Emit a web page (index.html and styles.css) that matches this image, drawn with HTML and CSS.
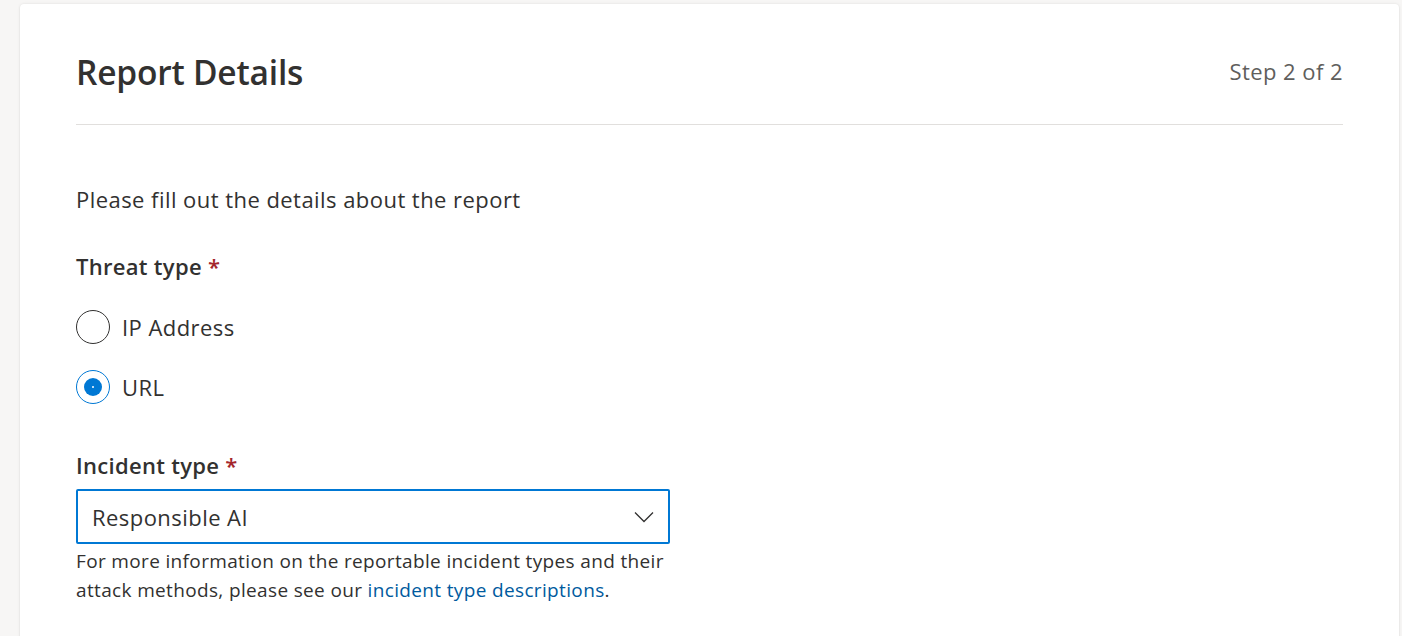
FILE: index.html
```html
<!DOCTYPE html>
<html lang="en">
<head>
<meta charset="utf-8">
<title>Report Details</title>
<link rel="stylesheet" href="styles.css">
</head>
<body>
<main class="card">
  <header class="card-header">
    <h1 class="title">Report Details</h1>
    <span class="step">Step 2 of 2</span>
  </header>
  <p class="intro">Please fill out the details about the report</p>

  <fieldset class="group">
    <legend class="label">Threat type <span class="req">*</span></legend>
    <label class="radio">
      <span class="radio-circle"></span>
      <span class="radio-text">IP Address</span>
    </label>
    <label class="radio">
      <span class="radio-circle checked"><span class="radio-dot"></span></span>
      <span class="radio-text">URL</span>
    </label>
  </fieldset>

  <div class="field">
    <div class="label">Incident type <span class="req">*</span></div>
    <div class="select">
      <span class="select-value">Responsible AI</span>
      <svg class="chevron" width="20" height="12" viewBox="0 0 20 12"><path d="M1 1.5 L10 10.5 L19 1.5" fill="none" stroke="#323130" stroke-width="1.3"/></svg>
    </div>
    <p class="help">For more information on the reportable incident types and their attack methods, please see our <a href="#" class="link">incident type descriptions</a>.</p>
  </div>
</main>
</body>
</html>
```
FILE: styles.css
```css
html, body {
  margin: 0;
  padding: 0;
  background: #f7f6f5;
  height: 100%;
  overflow: hidden;
}
body {
  font-family: "Open Sans", "Noto Sans", sans-serif;
  color: #323130;
  padding: 4px 3px 0 20px;
  box-sizing: border-box;
}
.card {
  background: #ffffff;
  border-radius: 4px;
  box-shadow: 0 0 3px rgba(0,0,0,0.10), 0 1px 2px rgba(0,0,0,0.06);
  padding: 0 56px 40px 56px;
  min-height: 700px;
}
.card-header {
  display: flex;
  justify-content: space-between;
  align-items: center;
  height: 120px;
  border-bottom: 1px solid #e1dfdd;
}
.title {
  margin: 0;
  font-size: 33.5px;
  font-weight: 600;
  color: #323130;
  letter-spacing: -0.2px;
  padding-top: 16px;
}
.step {
  font-size: 22px;
  letter-spacing: 0.45px;
  color: #605e5c;
  padding-top: 14px;
}
.intro {
  margin: 58px 0 0 0;
  font-size: 22px;
  letter-spacing: 0.45px;
  line-height: 32px;
}
.group {
  border: 0;
  margin: 35px 0 0 0;
  padding: 0;
}
.label {
  font-size: 22px;
  letter-spacing: 0.3px;
  font-weight: 600;
  line-height: 32px;
  padding: 0;
  margin: 0;
}
.req {
  color: #a4262c;
}
.radio {
  display: flex;
  align-items: center;
  gap: 12px;
  height: 34px;
  margin-top: 28px;
}
.radio + .radio {
  margin-top: 26px;
}
.radio-circle {
  width: 34px;
  height: 34px;
  border: 1px solid #323130;
  border-radius: 50%;
  box-sizing: border-box;
  display: flex;
  align-items: center;
  justify-content: center;
}
.radio-circle.checked {
  border-color: #0078d4;
}
.radio-dot {
  width: 18px;
  height: 18px;
  border-radius: 50%;
  background: #0078d4;
  display: flex;
  align-items: center;
  justify-content: center;
}
.radio-dot::after {
  content: "";
  width: 2px;
  height: 2px;
  background: #fff;
  border-radius: 50%;
}
.radio-text {
  font-size: 22px;
  letter-spacing: 0.45px;
}
.field {
  margin-top: 45px;
}
.select {
  margin-top: 8px;
  width: 594px;
  height: 55px;
  box-sizing: border-box;
  border: 2px solid #0078d4;
  border-radius: 2px;
  display: flex;
  align-items: center;
  justify-content: space-between;
  padding: 0 14px 0 14px;
}
.select-value {
  font-size: 22px;
  letter-spacing: 0.45px;
}
.help {
  margin: 3px 0 0 0;
  width: 600px;
  font-size: 19px;
  letter-spacing: 0.35px;
  line-height: 29px;
}
.link {
  color: #005a9e;
  text-decoration: none;
}
```
